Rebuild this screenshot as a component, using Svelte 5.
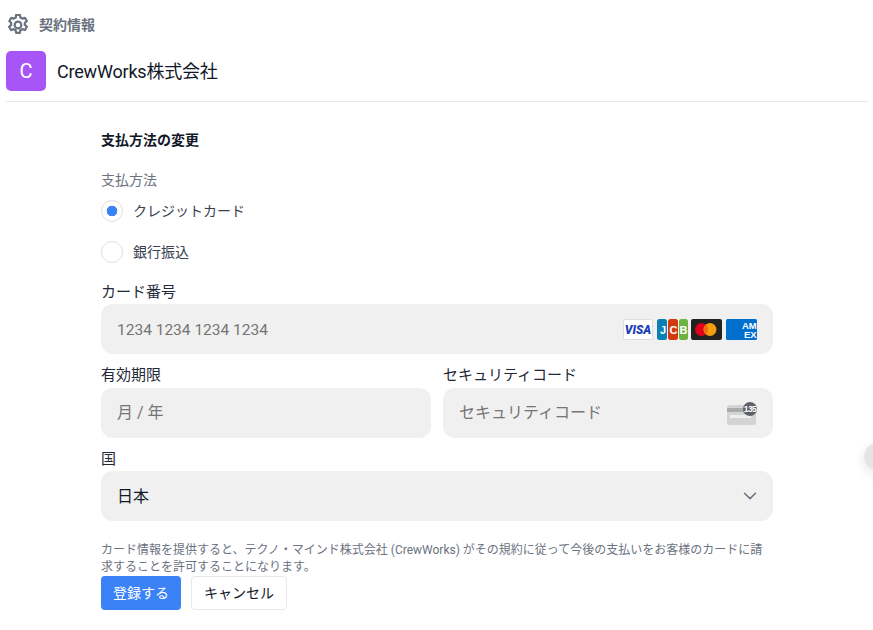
<script>
  let method = $state("card");
</script>

<div class="page">
  <header class="crumb">
    <svg class="gear" viewBox="3 2.1 18 19.8" width="20" height="22" fill="none" stroke="#6b7280" stroke-width="2" stroke-linecap="round" stroke-linejoin="round">
      <path d="M10.3 2.9h3.4l.5 2.5c.6.2 1.2.5 1.7.9l2.4-.8 1.7 2.9-1.9 1.7c.1.6.1 1.2 0 1.8l1.9 1.7-1.7 2.9-2.4-.8c-.5.4-1.1.7-1.7.9l-.5 2.5h-3.4l-.5-2.5c-.6-.2-1.2-.5-1.7-.9l-2.4.8-1.7-2.9 1.9-1.7c-.1-.6-.1-1.2 0-1.8L4.2 8.4l1.7-2.9 2.4.8c.5-.4 1.1-.7 1.7-.9z" />
      <circle cx="12" cy="12" r="3" />
    </svg>
    <span>契約情報</span>
  </header>

  <div class="company">
    <div class="avatar">C</div>
    <div class="company-name">CrewWorks株式会社</div>
  </div>

  <form class="form">
    <h2>支払方法の変更</h2>

    <div class="method-label">支払方法</div>
    <label class="radio-row">
      <input type="radio" bind:group={method} value="card" />
      <span>クレジットカード</span>
    </label>
    <label class="radio-row second">
      <input type="radio" bind:group={method} value="bank" />
      <span>銀行振込</span>
    </label>

    <div class="field-label first">カード番号</div>
    <div class="box">
      <span class="placeholder num">1234 1234 1234 1234</span>
      <div class="brands">
        <svg width="30" height="21" viewBox="0 0 30 21">
          <rect x="0.5" y="0.5" width="29" height="20" rx="2" fill="#fff" stroke="#ddd" />
          <text x="15" y="15" class="visa">VISA</text>
        </svg>
        <svg class="jcb-card" width="31" height="21" viewBox="0 0 31 21">
          <rect x="0" width="10" height="21" rx="2.5" fill="#0b7fb5" />
          <rect x="11" width="10" height="21" rx="2.5" fill="#d2390f" />
          <rect x="22" width="9" height="21" rx="2.5" fill="#6cb33f" />
          <text x="6" y="14.5" class="jcb">J</text>
          <text x="16.5" y="14.5" class="jcb">C</text>
          <text x="26.5" y="14.5" class="jcb">B</text>
        </svg>
        <svg width="31" height="21" viewBox="0 0 31 21">
          <rect width="31" height="21" rx="2" fill="#222" />
          <circle cx="10.5" cy="10.5" r="6.5" fill="#e2001a" />
          <circle cx="19" cy="10.5" r="6.5" fill="#f59e0b" />
          <path d="M14.75 5.6a6.5 6.5 0 0 1 0 9.8a6.5 6.5 0 0 1 0-9.8z" fill="#f26a11" />
        </svg>
        <svg width="31" height="21" viewBox="0 0 31 21">
          <rect width="31" height="21" rx="1.5" fill="#0070cf" />
          <text x="16" y="10" class="amex">AM</text>
          <text x="18" y="19" class="amex">EX</text>
        </svg>
      </div>
    </div>

    <div class="two">
      <div>
        <div class="field-label">有効期限</div>
        <div class="box"><span class="placeholder">月 / 年</span></div>
      </div>
      <div>
        <div class="field-label">セキュリティコード</div>
        <div class="box">
          <span class="placeholder">セキュリティコード</span>
          <svg class="cvc" width="30" height="23" viewBox="0 0 30 23">
            <rect x="0" y="3" width="29" height="20" rx="2" fill="#d4d4d4" />
            <rect x="0" y="6" width="29" height="4" fill="#aaa" />
            <rect x="3" y="13" width="21" height="3" fill="#efefef" />
            <circle cx="23" cy="7" r="7" fill="#5f6068" />
            <text x="23" y="10" class="cvc-text">135</text>
          </svg>
        </div>
      </div>
    </div>

    <div class="field-label country">国</div>
    <div class="box select">
      <span>日本</span>
      <svg width="14" height="8" viewBox="0 0 14 8" fill="none" stroke="#6b7280" stroke-width="1.5" stroke-linecap="round" stroke-linejoin="round">
        <path d="M1.5 1.2 7 6.6l5.5-5.4" />
      </svg>
    </div>

    <p class="note">カード情報を提供すると、テクノ・マインド株式会社 (CrewWorks) がその規約に従って今後の支払いをお客様のカードに請求することを許可することになります。</p>

    <div class="actions">
      <button type="button" class="primary">登録する</button>
      <button type="button" class="cancel">キャンセル</button>
    </div>
  </form>

  <div class="knob"></div>
</div>

<style>
  :global(body) {
    margin: 0;
    background: #fff;
    font-family: Roboto, "Noto Sans CJK JP", sans-serif;
    color: #111827;
  }

  .page {
    position: relative;
    width: 873px;
    height: 630px;
    overflow: hidden;
    box-sizing: border-box;
    padding: 14px 5px 0 6px;
  }

  .crumb {
    display: flex;
    align-items: center;
    gap: 11px;
    height: 21px;
    padding-left: 2px;
    font-size: 14px;
    font-weight: 700;
    color: #6b7280;
  }

  .crumb span {
    position: relative;
    top: -1px;
  }

  .company {
    display: flex;
    align-items: center;
    gap: 11px;
    margin-top: 16px;
    padding-bottom: 10px;
    border-bottom: 1px solid #e5e7eb;
  }

  .avatar {
    width: 40px;
    height: 40px;
    padding-bottom: 1px;
    box-sizing: border-box;
    border-radius: 5px;
    background: #a855f7;
    color: #fff;
    font-size: 20px;
    display: flex;
    align-items: center;
    justify-content: center;
  }

  .company-name {
    font-size: 18px;
    letter-spacing: -0.2px;
    line-height: 42px;
    height: 40px;
  }

  .form {
    width: 672px;
    margin-left: 95px;
  }

  h2 {
    margin: 28px 0 0;
    font-size: 14px;
    line-height: 20px;
    font-weight: 700;
    color: #111827;
  }

  .method-label {
    margin-top: 20px;
    font-size: 14px;
    line-height: 20px;
    color: #6b7280;
  }

  .radio-row {
    display: flex;
    align-items: center;
    gap: 10px;
    height: 22px;
    margin-top: 10px;
    font-size: 14px;
    color: #374151;
  }

  .radio-row span {
    position: relative;
    top: -1px;
  }

  .radio-row.second {
    margin-top: 19px;
  }

  .radio-row input {
    appearance: none;
    width: 22px;
    height: 22px;
    margin: 0;
    border: 1px solid #e0e0e0;
    border-radius: 50%;
    background: #fff;
    position: relative;
  }

  .radio-row input:checked {
    background: radial-gradient(circle, #3b82f6 0 5px, #fff 5.6px);
  }

  .field-label {
    font-size: 15px;
    line-height: 20px;
    color: #1f2937;
    padding-top: 1px;
    margin-bottom: 3px;
  }

  .field-label.first {
    margin-top: 18px;
    margin-bottom: 2px;
  }

  .field-label.country {
    padding-top: 0;
    margin-top: 11px;
    margin-bottom: 2px;
  }

  .box {
    height: 50px;
    box-sizing: border-box;
    padding: 0 16px;
    background: #f0f0f0;
    border-radius: 12px;
    display: flex;
    align-items: center;
    justify-content: space-between;
    font-size: 16px;
  }

  .placeholder {
    color: #757575;
    position: relative;
    top: -2px;
  }

  .placeholder.num {
    font-size: 15.5px;
    top: 1px;
  }

  .brands {
    display: flex;
    gap: 4px;
  }

  .brands svg {
    display: block;
  }

  .jcb-card {
    margin-right: -1px;
  }

  .visa {
    font: italic 900 12px Roboto, sans-serif;
    fill: #1a3fb5;
    text-anchor: middle;
  }

  .jcb {
    font: 700 11px "Liberation Sans", sans-serif;
    fill: #fff;
    text-anchor: middle;
  }

  .amex {
    font: 900 9.5px "Liberation Sans", sans-serif;
    fill: #fff;
  }

  .cvc-text {
    font: 700 8.5px "Liberation Sans", sans-serif;
    letter-spacing: -0.6px;
    fill: #fff;
    text-anchor: middle;
  }

  .two {
    display: grid;
    grid-template-columns: 1fr 1fr;
    gap: 12px;
    margin-top: 10px;
  }

  .select {
    color: #111827;
  }

  .select span {
    position: relative;
    top: -1px;
  }

  .note {
    margin: 21px 0 0;
    font-size: 12px;
    line-height: 17px;
    color: #6b7280;
  }

  .actions {
    display: flex;
    gap: 10px;
  }

  button {
    height: 34px;
    box-sizing: border-box;
    border-radius: 4px;
    font-family: inherit;
    font-size: 14px;
    padding: 0 0 2px;
  }

  .primary {
    width: 80px;
    background: #3b82f6;
    border: none;
    color: #fff;
  }

  .cancel {
    width: 96px;
    background: #fff;
    border: 1px solid #e5e7eb;
    color: #111827;
  }

  .knob {
    position: absolute;
    left: 864px;
    top: 443px;
    width: 28px;
    height: 27px;
    border-radius: 50%;
    background: #e5e5e5;
    box-shadow: 0 4px 12px rgba(0, 0, 0, 0.1);
  }
</style>
